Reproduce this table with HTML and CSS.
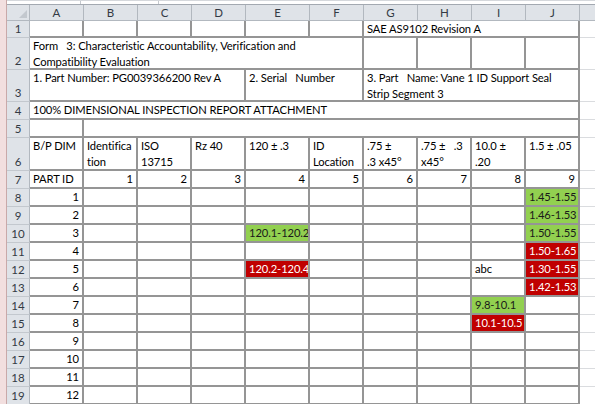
FILE: index.html
```html
<!DOCTYPE html>
<html>
<head>
<meta charset="utf-8">
<link rel="stylesheet" href="styles.css">
</head>
<body>
<div class="frame"></div>
<div class="main">
  <div class="topbar"><span class="tb-seg1"></span><span class="tb-seg2"></span></div>
  <div class="sheet">
    <div class="corner"><span class="tri"></span></div>
    <div class="ch">A</div><div class="ch">B</div><div class="ch">C</div><div class="ch">D</div><div class="ch">E</div><div class="ch">F</div><div class="ch">G</div><div class="ch">H</div><div class="ch">I</div><div class="ch">J</div><div class="ch ch-k"></div>

    <div class="rh">1</div>
    <div class="c"></div><div class="c"></div><div class="c"></div><div class="c"></div><div class="c"></div><div class="c"></div>
    <div class="c s4">SAE AS9102 Revision A</div>
    <div class="k"></div>

    <div class="rh">2</div>
    <div class="c s6">Form&nbsp;&nbsp; 3: Characteristic Accountability, Verification and<br>Compatibility Evaluation</div>
    <div class="c"></div><div class="c"></div><div class="c"></div><div class="c"></div>
    <div class="k"></div>

    <div class="rh">3</div>
    <div class="c s4">1. Part Number: PG0039366200 Rev A</div>
    <div class="c s2">2. Serial&nbsp;&nbsp; Number</div>
    <div class="c s4">3. Part&nbsp;&nbsp; Name: Vane 1 ID Support Seal<br>Strip Segment 3</div>
    <div class="k"></div>

    <div class="rh">4</div>
    <div class="c s10">100% DIMENSIONAL INSPECTION REPORT ATTACHMENT</div>
    <div class="k"></div>

    <div class="rh">5</div>
    <div class="c"></div>
    <div class="c s9"></div>
    <div class="k"></div>

    <div class="rh">6</div>
    <div class="c">B/P DIM</div>
    <div class="c">Identifica<br>tion</div>
    <div class="c">ISO<br>13715</div>
    <div class="c">Rz 40</div>
    <div class="c">120 ± .3</div>
    <div class="c">ID<br>Location</div>
    <div class="c">.75 ±<br>.3 x45°</div>
    <div class="c">.75 ±&nbsp;&nbsp; .3<br>x45°</div>
    <div class="c">10.0 ±<br>.20</div>
    <div class="c">1.5 ± .05</div>
    <div class="k"></div>

    <div class="rh">7</div>
    <div class="c">PART ID</div>
    <div class="c n">1</div><div class="c n">2</div><div class="c n">3</div><div class="c n">4</div><div class="c n">5</div><div class="c n">6</div><div class="c n">7</div><div class="c n">8</div><div class="c n">9</div>
    <div class="k"></div>

    <div class="rh">8</div>
    <div class="c n">1</div><div class="c"></div><div class="c"></div><div class="c"></div><div class="c"></div><div class="c"></div><div class="c"></div><div class="c"></div><div class="c"></div>
    <div class="c ok">1.45-1.55</div>
    <div class="k"></div>

    <div class="rh">9</div>
    <div class="c n">2</div><div class="c"></div><div class="c"></div><div class="c"></div><div class="c"></div><div class="c"></div><div class="c"></div><div class="c"></div><div class="c"></div>
    <div class="c ok">1.46-1.53</div>
    <div class="k"></div>

    <div class="rh">10</div>
    <div class="c n">3</div><div class="c"></div><div class="c"></div><div class="c"></div>
    <div class="c ok">120.1-120.2</div>
    <div class="c"></div><div class="c"></div><div class="c"></div><div class="c"></div>
    <div class="c ok">1.50-1.55</div>
    <div class="k"></div>

    <div class="rh">11</div>
    <div class="c n">4</div><div class="c"></div><div class="c"></div><div class="c"></div><div class="c"></div><div class="c"></div><div class="c"></div><div class="c"></div><div class="c"></div>
    <div class="c bad">1.50-1.65</div>
    <div class="k"></div>

    <div class="rh">12</div>
    <div class="c n">5</div><div class="c"></div><div class="c"></div><div class="c"></div>
    <div class="c bad">120.2-120.4</div>
    <div class="c"></div><div class="c"></div><div class="c"></div>
    <div class="c">abc</div>
    <div class="c bad">1.30-1.55</div>
    <div class="k"></div>

    <div class="rh">13</div>
    <div class="c n">6</div><div class="c"></div><div class="c"></div><div class="c"></div><div class="c"></div><div class="c"></div><div class="c"></div><div class="c"></div><div class="c"></div>
    <div class="c bad">1.42-1.53</div>
    <div class="k"></div>

    <div class="rh">14</div>
    <div class="c n">7</div><div class="c"></div><div class="c"></div><div class="c"></div><div class="c"></div><div class="c"></div><div class="c"></div><div class="c"></div>
    <div class="c ok">9.8-10.1</div>
    <div class="c"></div>
    <div class="k"></div>

    <div class="rh">15</div>
    <div class="c n">8</div><div class="c"></div><div class="c"></div><div class="c"></div><div class="c"></div><div class="c"></div><div class="c"></div><div class="c"></div>
    <div class="c bad">10.1-10.5</div>
    <div class="c"></div>
    <div class="k"></div>

    <div class="rh">16</div>
    <div class="c n">9</div><div class="c"></div><div class="c"></div><div class="c"></div><div class="c"></div><div class="c"></div><div class="c"></div><div class="c"></div><div class="c"></div><div class="c"></div>
    <div class="k"></div>

    <div class="rh">17</div>
    <div class="c n">10</div><div class="c"></div><div class="c"></div><div class="c"></div><div class="c"></div><div class="c"></div><div class="c"></div><div class="c"></div><div class="c"></div><div class="c"></div>
    <div class="k"></div>

    <div class="rh">18</div>
    <div class="c n">11</div><div class="c"></div><div class="c"></div><div class="c"></div><div class="c"></div><div class="c"></div><div class="c"></div><div class="c"></div><div class="c"></div><div class="c"></div>
    <div class="k"></div>

    <div class="rh">19</div>
    <div class="c n">12</div><div class="c"></div><div class="c"></div><div class="c"></div><div class="c"></div><div class="c"></div><div class="c"></div><div class="c"></div><div class="c"></div><div class="c"></div>
    <div class="k"></div>
  </div>
</div>
</body>
</html>
```
FILE: styles.css
```css
html, body {
  margin: 0;
  padding: 0;
  background: #ffffff;
}
body {
  display: flex;
  width: 595px;
  height: 404px;
  overflow: hidden;
  font-family: "Lato", "Liberation Sans", sans-serif;
  font-size: 11.2px;
  color: #000;
}
.frame {
  width: 6px;
  flex: none;
  background: #f2dfdf;
  border-right: 1px solid #c9a9a9;
}
.main {
  flex: 1;
  display: flex;
  flex-direction: column;
  min-width: 0;
}
.topbar {
  height: 5px;
  flex: none;
  box-sizing: border-box;
  border-top: 1px solid #d5d8dc;
  border-bottom: 1px solid #a3a9b1;
  display: flex;
}
.tb-seg1 {
  width: 73px;
  border-right: 1px solid #c5c9ce;
}
.tb-seg2 {
  width: 77px;
  border-right: 1px solid #c5c9ce;
}
.sheet {
  display: grid;
  grid-template-columns: 23px 54px 54px 54px 54px 64px 54px 54px 54px 54px 54px 1fr;
  grid-template-rows: 16px 17px 32px 32px 18px 18px 33px repeat(13, 18px);
}
.corner {
  background: #dfe3e8;
  box-sizing: border-box;
  border-right: 1px solid #b2b8bf;
  border-bottom: 1px solid #b2b8bf;
  position: relative;
}
.tri {
  position: absolute;
  right: 2px;
  bottom: 2px;
  width: 0;
  height: 0;
  border-left: 8px solid transparent;
  border-bottom: 8px solid #c3c8ce;
}
.ch {
  background: #dfe3e8;
  box-sizing: border-box;
  border-right: 1px solid #b2b8bf;
  border-bottom: 1px solid #b2b8bf;
  text-align: center;
  font-size: 11.5px;
  line-height: 15px;
  color: #333a44;
}
.ch-k {
  border-right: none;
}
.rh {
  background: #dfe3e8;
  box-sizing: border-box;
  border-right: 1px solid #b2b8bf;
  border-bottom: 1px solid #c3c8ce;
  display: flex;
  align-items: flex-end;
  justify-content: center;
  font-size: 11.5px;
  line-height: 16px;
  color: #333a44;
}
.c {
  box-sizing: border-box;
  border-right: 2px solid #959595;
  border-bottom: 2px solid #959595;
  padding: 0 3px 0 3px;
  line-height: 16px;
  letter-spacing: -0.1px;
  white-space: nowrap;
  overflow: hidden;
}
.k {
  box-sizing: border-box;
  border-bottom: 1px solid #dadcdf;
}
.n {
  text-align: right;
}
.ok {
  background: #92d050;
  color: #1a1a1a;
}
.bad {
  background: #c00000;
  color: #ffffff;
}
.s2 { grid-column: span 2; }
.s4 { grid-column: span 4; }
.s6 { grid-column: span 6; }
.s9 { grid-column: span 9; }
.s10 { grid-column: span 10; }
```
